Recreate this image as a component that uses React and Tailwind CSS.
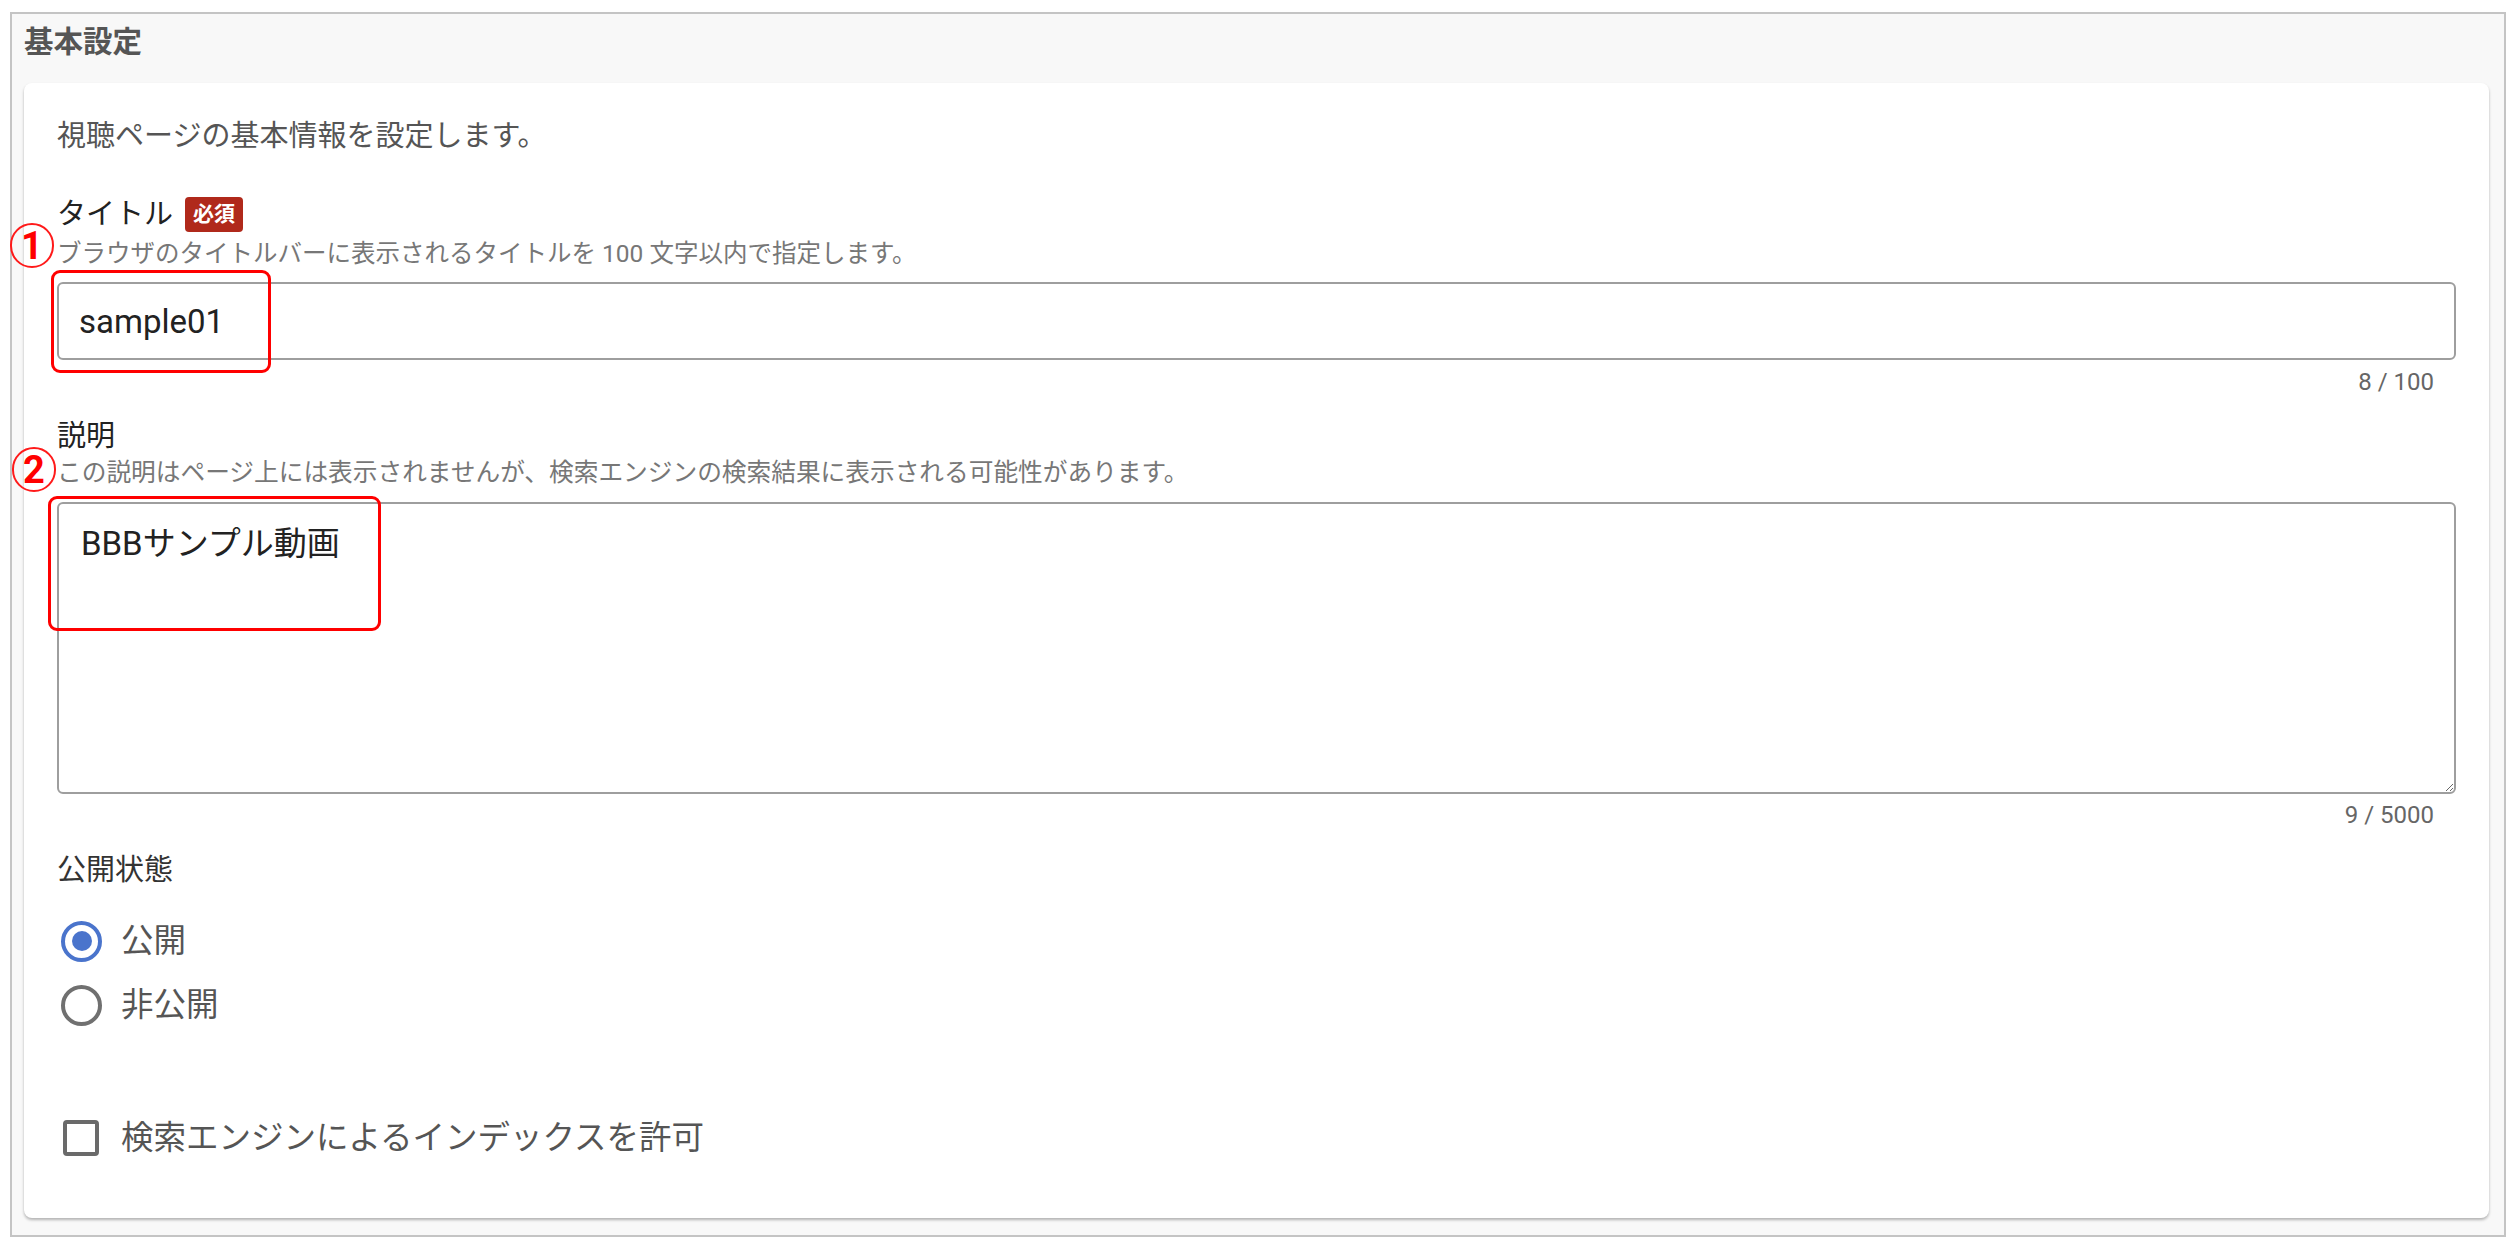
import { useState } from 'react';

const font = { fontFamily: 'Roboto, "Noto Sans CJK JP", sans-serif' };

function Marker({ n, className }) {
  return (
    <span
      className={`absolute flex items-center justify-center w-[44px] h-[45px] rounded-full border-2 border-[#ff1a1a] text-[#ff0000] text-[38px] font-bold leading-none ${className}`}
    >
      {n}
    </span>
  );
}

function Radio({ checked, label, onClick }) {
  return (
    <label className="flex items-center h-[50px] cursor-pointer" onClick={onClick}>
      <span className="w-[64px] flex items-center pl-[4px]">
        {checked ? (
          <span className="w-[41px] h-[41px] rounded-full border-[4px] border-[#4a74cc] flex items-center justify-center">
            <span className="w-[20px] h-[20px] rounded-full bg-[#4a74cc]" />
          </span>
        ) : (
          <span className="w-[41px] h-[41px] rounded-full border-[4px] border-[#707070]" />
        )}
      </span>
      <span className="text-[32.5px] text-[#555]">{label}</span>
    </label>
  );
}

export default function App() {
  const [title, setTitle] = useState('sample01');
  const [desc, setDesc] = useState('BBBサンプル動画');
  const [status, setStatus] = useState('public');
  const [indexed, setIndexed] = useState(false);

  return (
    <div className="w-full h-[1245px] bg-white pt-[12px] px-[10px] pb-[8px]" style={font}>
      <div className="h-full flex flex-col border-2 border-[#c4c4c4] bg-[#f8f8f8]">
        <div className="h-[69px] shrink-0 pl-[12px] pt-[12px]">
          <h2 className="text-[29.5px] leading-[32px] font-bold text-[#555]">基本設定</h2>
        </div>

        <div className="relative flex-1 ml-[12px] mr-[15px] mb-[17px] bg-white rounded-[8px] shadow-[0_2px_3px_rgba(0,0,0,0.28)] px-[33px] pt-[33px] flex flex-col">
          <p className="text-[29px] leading-[40px] text-[#555]">視聴ページの基本情報を設定します。</p>

          <div className="mt-[38px] flex items-center h-[40px]">
            <span className="text-[29px] leading-[40px] text-[#222]">タイトル</span>
            <span className="ml-[12px] h-[35px] px-[8px] rounded-[4px] bg-[#b0291b] text-white text-[21px] font-bold leading-[35px]">必須</span>
          </div>
          <p className="mt-[4px] text-[24.5px] leading-[32px] text-[#777]">
            ブラウザのタイトルバーに表示されるタイトルを 100 文字以内で指定します。
          </p>
          <div className="relative mt-[12px]">
            <input
              value={title}
              onChange={(e) => setTitle(e.target.value)}
              className="w-full h-[78px] border-2 border-[#9e9e9e] rounded-[6px] pl-[20px] text-[33px] text-[#222] outline-none"
            />
            <span className="absolute left-[-6px] top-[-12px] w-[220px] h-[103px] border-[3px] border-[#ff0000] rounded-[9px] pointer-events-none" />
          </div>
          <p className="mt-[8px] pr-[22px] text-right text-[24px] leading-[28px] text-[#666]">{title.length} / 100</p>

          <p className="mt-[20px] text-[29px] leading-[40px] text-[#222]">説明</p>
          <p className="mt-[1px] text-[24.7px] leading-[32px] text-[#777]">
            この説明はページ上には表示されませんが、検索エンジンの検索結果に表示される可能性があります。
          </p>
          <div className="relative mt-[13px]">
            <textarea
              value={desc}
              onChange={(e) => setDesc(e.target.value)}
              className="block w-full h-[292px] border-2 border-[#9e9e9e] rounded-[6px] pl-[22px] pt-[16px] text-[33px] leading-[48px] text-[#222] outline-none resize-y"
            />
            <span className="absolute left-[-9px] top-[-6px] w-[333px] h-[135px] border-[3px] border-[#ff0000] rounded-[9px] pointer-events-none" />
          </div>
          <p className="mt-[7px] pr-[22px] text-right text-[24px] leading-[28px] text-[#666]">{desc.length} / 5000</p>

          <p className="mt-[21px] text-[29px] leading-[40px] text-[#333]">公開状態</p>
          <div className="mt-[26px] flex flex-col gap-[14px]">
            <Radio checked={status === 'public'} label="公開" onClick={() => setStatus('public')} />
            <Radio checked={status === 'private'} label="非公開" onClick={() => setStatus('private')} />
          </div>

          <label className="mt-[83px] flex items-center h-[50px] cursor-pointer" onClick={() => setIndexed(!indexed)}>
            <span className="w-[64px] flex items-center pl-[6px]">
              <span className={`w-[36px] h-[36px] rounded-[4px] border-[4px] border-[#6a6a6a] flex items-center justify-center text-[26px] font-bold ${indexed ? 'bg-[#6a6a6a] text-white' : 'text-[#6a6a6a]'}`}>
                {indexed ? '✓' : ''}
              </span>
            </span>
            <span className="text-[32.5px] text-[#555]">検索エンジンによるインデックスを許可</span>
          </label>

          <Marker n="1" className="left-[-14px] top-[140px]" />
          <Marker n="2" className="left-[-12px] top-[364px]" />
        </div>
      </div>
    </div>
  );
}
